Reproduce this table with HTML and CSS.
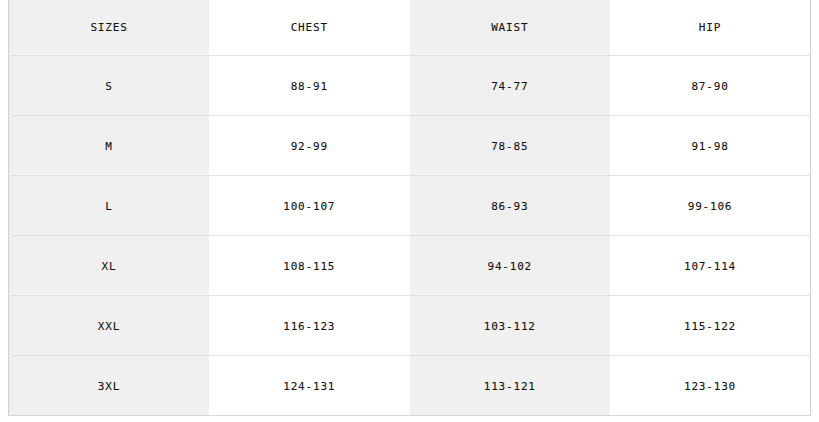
FILE: index.html
```html
<!DOCTYPE html>
<html>
<head>
<meta charset="utf-8">
<link rel="stylesheet" href="styles.css">
</head>
<body>
<table class="size-table">
  <thead>
    <tr><th class="shade">SIZES</th><th>CHEST</th><th class="shade">WAIST</th><th>HIP</th></tr>
  </thead>
  <tbody>
    <tr><td class="shade">S</td><td>88-91</td><td class="shade">74-77</td><td>87-90</td></tr>
    <tr><td class="shade">M</td><td>92-99</td><td class="shade">78-85</td><td>91-98</td></tr>
    <tr><td class="shade">L</td><td>100-107</td><td class="shade">86-93</td><td>99-106</td></tr>
    <tr><td class="shade">XL</td><td>108-115</td><td class="shade">94-102</td><td>107-114</td></tr>
    <tr><td class="shade">XXL</td><td>116-123</td><td class="shade">103-112</td><td>115-122</td></tr>
    <tr><td class="shade">3XL</td><td>124-131</td><td class="shade">113-121</td><td>123-130</td></tr>
  </tbody>
</table>
</body>
</html>
```
FILE: styles.css
```css
html, body { background: #fff; }
body { margin: 0 8px; }
.size-table {
  width: 100%;
  border-collapse: collapse;
  table-layout: fixed;
  border-left: 1px solid #cfcfcf;
  border-right: 1px solid #cfcfcf;
  border-bottom: 1px solid #d8d8d8;
  font-family: "DejaVu Sans Mono", "Liberation Mono", monospace;
  font-size: 11px;
  letter-spacing: 0.8px;
  color: #111;
  -webkit-text-stroke: 0.1px #111;
}
.size-table th, .size-table td {
  padding: 0;
  text-align: center;
  vertical-align: middle;
  font-weight: normal;
}
.size-table th { height: 55px; }
.size-table td { height: 58px; padding-top: 1px; border-top: 1px solid #e2e2e2; }
.shade { background: #f0f0f0; }
```
